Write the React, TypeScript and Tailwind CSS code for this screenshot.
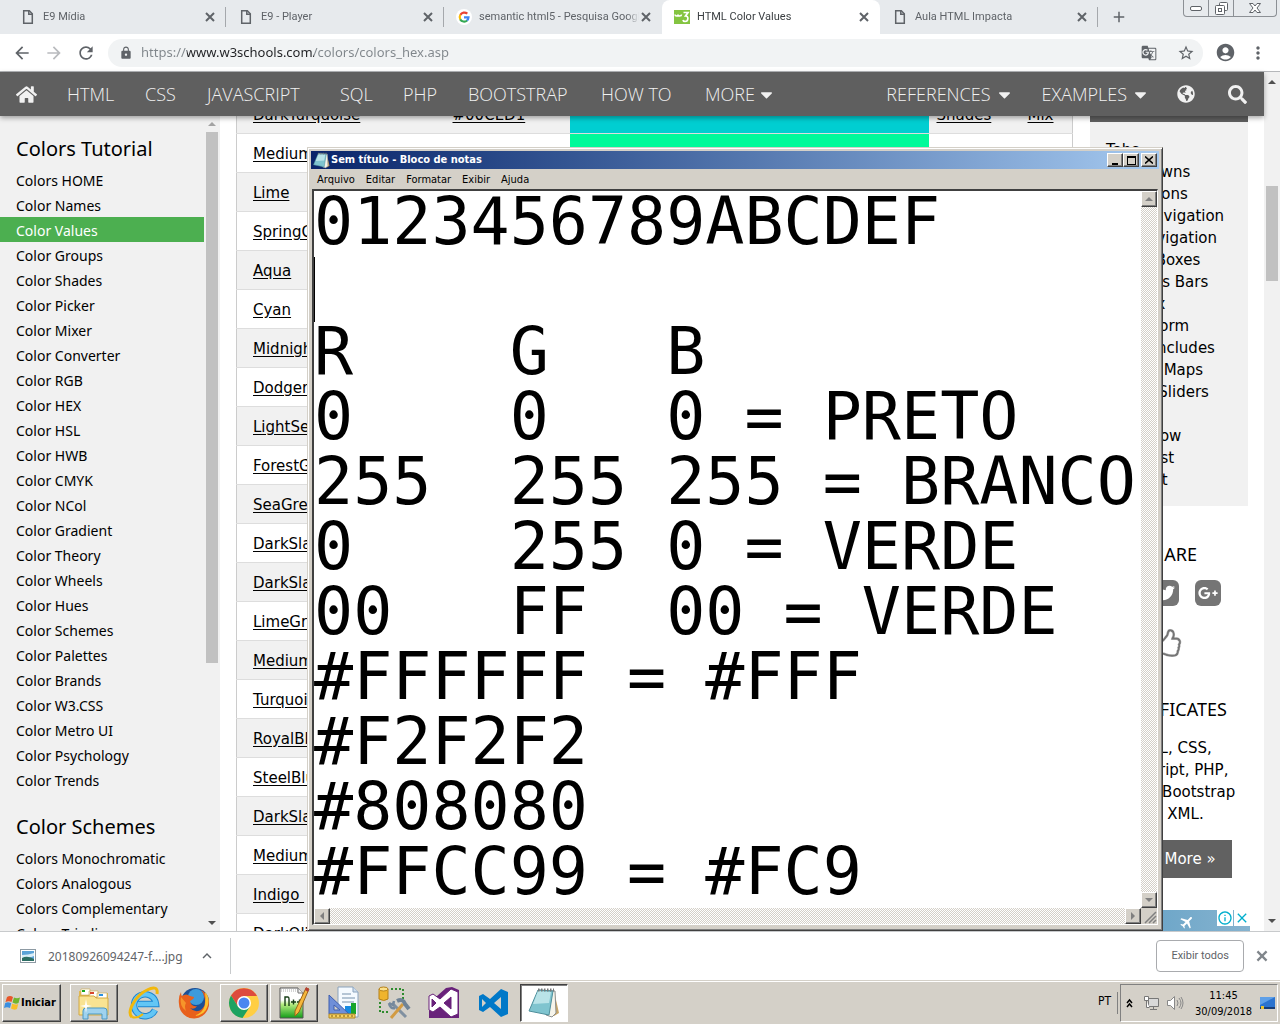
import React from "react";
import { FaHome, FaSearch, FaGlobeAmericas, FaCaretDown, FaTwitter, FaGooglePlusG, FaFacebookF, FaRegThumbsUp } from "react-icons/fa";
import { MdArrowBack, MdArrowForward, MdRefresh, MdLock, MdStarBorder, MdAccountCircle, MdMoreVert, MdGTranslate, MdClose, MdAdd, MdExpandLess, MdInfoOutline, MdLocalAirport } from "react-icons/md";

const ui = "font-['Noto_Sans',sans-serif]";
const verdana = "font-['DejaVu_Sans',sans-serif]";

function PageIcon() {
  return (
    <svg width="16" height="16" viewBox="0 0 16 16" fill="none" stroke="#5f6368" strokeWidth="1.5" aria-hidden="true">
      <path d="M3.7 1.7h5.6l3 3v9.6H3.7z" />
      <path d="M8.8 1.7v3.6h3.5" />
    </svg>
  );
}

function GoogleIcon() {
  return (
    <svg width="16" height="16" viewBox="0 0 48 48" aria-hidden="true">
      <circle cx="24" cy="24" r="24" fill="#fff" />
      <g fill="none" strokeWidth="6.5">
        <path d="M13 17.5A14 14 0 0 1 34 14" stroke="#ea4335" />
        <path d="M13 31a14 14 0 0 1 0-14" stroke="#fbbc05" />
        <path d="M12.500 31a14 14 0 0 0 21 3.500" stroke="#34a853" />
        <path d="M24 25h13.500a14 14 0 0 1-4.500 9.500" stroke="#4285f4" />
      </g>
    </svg>
  );
}

function W3Icon() {
  return (
    <svg width="16" height="14" viewBox="0 0 16 14" aria-hidden="true">
      <rect width="16" height="14" fill="#84c441" />
      <path d="M1 4.500c0 2 3 2 3 0 0 2 3.500 2 3.500 0" fill="none" stroke="#fff" strokeWidth="1.600" />
      <path d="M9.500 2.500h4.500l-2.500 3.500c3.500 0 3 5.500-.5 5.500-1 0-1.800-.5-2-1.500" fill="none" stroke="#fff" strokeWidth="1.700" />
    </svg>
  );
}

function CrossIcon({ size }: { size: number }) {
  return (
    <svg width={size} height={size} viewBox="0 0 14 14" fill="none" stroke="currentColor" strokeWidth="2" aria-hidden="true">
      <path d="M3 3l8 8M11 3l-8 8" />
    </svg>
  );
}

const tabs = [
  { title: "E9 Mídia", icon: <PageIcon />, active: false, sep: true },
  { title: "E9 - Player", icon: <PageIcon />, active: false, sep: true },
  { title: "semantic html5 - Pesquisa Google", icon: <GoogleIcon />, active: false, sep: false },
  { title: "HTML Color Values", icon: <W3Icon />, active: true, sep: false },
  { title: "Aula HTML Impacta", icon: <PageIcon />, active: false, sep: true },
];

function TabStrip() {
  return (
    <header className="relative flex h-[34px] shrink-0 bg-[#e7eaed] pl-2 font-[Roboto,sans-serif] text-[11px] text-[#5f6368]">
      {tabs.map((t) => (
        <div
          key={t.title}
          className={
            t.active
              ? "relative flex w-[218px] items-center rounded-t-lg bg-white pl-3 pr-[9px] text-[#3c4043]"
              : "relative flex w-[218px] items-center pl-3 pr-[9px]"
          }
        >
          {t.icon}
          <span className="ml-[7px] min-w-0 flex-1 overflow-hidden whitespace-nowrap [mask-image:linear-gradient(to_left,transparent,#000_12px)]">{t.title}</span>
          <button aria-label={`Fechar ${t.title}`} className="text-[#5f6368]">
            <CrossIcon size={14} />
          </button>
          {t.sep && <span className="absolute right-0 top-[7px] h-5 w-px bg-[#a5a8ac]" />}
        </div>
      ))}
      <button aria-label="Nova guia" className="ml-3 text-[#5f6368]">
        <MdAdd size={18} />
      </button>
      <div className="absolute right-[3px] top-0 flex h-[17px] w-[94px] divide-x divide-[#8c9095] rounded-b border border-t-0 border-[#8c9095]">
        <button aria-label="Minimizar" className="flex w-[25px] items-center justify-center">
          <svg width="12" height="5"><rect x=".5" y=".5" width="11" height="4" rx="1.500" fill="#fff" stroke="#5f6368" /></svg>
        </button>
        <button aria-label="Restaurar" className="flex w-[25px] items-center justify-center">
          <svg width="13" height="13" fill="#fff" stroke="#5f6368">
            <rect x="4.500" y=".5" width="8" height="8" rx="1" />
            <rect x=".5" y="3.500" width="9" height="9" rx="1" />
            <rect x="3.500" y="6.500" width="3" height="3" />
          </svg>
        </button>
        <button aria-label="Fechar" className="flex flex-1 items-center justify-center">
          <svg width="12" height="10" viewBox="0 0 12 10" fill="#fff" stroke="#5f6368">
            <path d="M.5.500h3.500l2 2.500 2-2.500h3.500L8 5l3.500 4.500H8L6 7 4 9.500H.5L4 5z" />
          </svg>
        </button>
      </div>
    </header>
  );
}

function Toolbar() {
  return (
    <div className="flex h-[38px] shrink-0 items-center border-b border-[#b5b7ba] bg-white pl-3 pr-3 text-[#5f6368]">
      <button aria-label="Voltar" className="w-8"><MdArrowBack size={20} /></button>
      <button aria-label="Avançar" className="w-8 text-[#b9bbbe]"><MdArrowForward size={20} /></button>
      <button aria-label="Recarregar" className="w-8"><MdRefresh size={20} /></button>
      <form className="flex h-7 flex-1 items-center rounded-full bg-[#f1f3f4] pl-[11px] pr-2">
        <MdLock size={14} />
        <label htmlFor="url" className="sr-only">Endereço</label>
        <input
          id="url"
          defaultValue="https://www.w3schools.com/colors/colors_hex.asp"
          className={`${ui} ml-2 min-w-0 flex-1 bg-[linear-gradient(to_right,#80868b_46px,#202124_46px,#202124_173px,#80868b_173px)] bg-clip-text text-[13px] text-transparent outline-none`}
        />
        <button type="button" aria-label="Traduzir" className="mr-5"><MdGTranslate size={16} /></button>
        <button type="button" aria-label="Favoritar"><MdStarBorder size={18} /></button>
      </form>
      <button aria-label="Perfil" className="ml-3"><MdAccountCircle size={21} /></button>
      <button aria-label="Menu" className="ml-3"><MdMoreVert size={20} /></button>
    </div>
  );
}

function SiteNav() {
  return (
    <nav className="relative z-10 flex h-11 shrink-0 items-center bg-[#5f5f5f] font-['Open_Sans',sans-serif] text-lg font-light text-[#f1f1f1] shadow-[0_2px_5px_rgba(0,0,0,0.35)]">
      <a href="#home" aria-label="Home" className="w-[51px] pl-4"><FaHome size={21} /></a>
      <a href="#html" className="w-[78px] pl-4">HTML</a>
      <a href="#css" className="w-[62px] pl-4">CSS</a>
      <a href="#js" className="w-[133px] pl-4">JAVASCRIPT</a>
      <a href="#sql" className="w-[63px] pl-4">SQL</a>
      <a href="#php" className="w-[65px] pl-4">PHP</a>
      <a href="#bootstrap" className="w-[133px] pl-4">BOOTSTRAP</a>
      <a href="#howto" className="w-[104px] whitespace-nowrap pl-4">HOW TO</a>
      <button className="flex items-center gap-[2px] px-4">MORE <FaCaretDown size={19} /></button>
      <span className="flex-1" />
      <button className="flex items-center gap-1 px-[14px]">REFERENCES <FaCaretDown size={19} /></button>
      <button className="flex items-center gap-1 px-[14px]">EXAMPLES <FaCaretDown size={19} /></button>
      <button aria-label="Translate" className="pl-[13px] pr-[17px]"><FaGlobeAmericas size={18} /></button>
      <button aria-label="Search" className="pl-4 pr-[17px]"><FaSearch size={19} /></button>
    </nav>
  );
}

const tutorial = ["Colors HOME", "Color Names", "Color Values", "Color Groups", "Color Shades", "Color Picker", "Color Mixer", "Color Converter", "Color RGB", "Color HEX", "Color HSL", "Color HWB", "Color CMYK", "Color NCol", "Color Gradient", "Color Theory", "Color Wheels", "Color Hues", "Color Schemes", "Color Palettes", "Color Brands", "Color W3.CSS", "Color Metro UI", "Color Psychology", "Color Trends"];
const schemes = ["Colors Monochromatic", "Colors Analogous", "Colors Complementary", "Colors Triadic"];

function SideLinks({ title, items }: { title: string; items: string[] }) {
  return (
    <section>
      <h2 className="px-4 text-xl leading-[30px]">{title}</h2>
      <ul className="mt-[3px]">
        {items.map((i) => (
          <li key={i}>
            <a href="#color" className={i === "Color Values" ? "block bg-[#4caf50] px-4 pt-[2px] text-sm leading-[23px] text-white" : "block px-4 pt-[2px] text-sm leading-[23px]"}>{i}</a>
          </li>
        ))}
      </ul>
    </section>
  );
}

function Arrow({ dir, color = "#505050" }: { dir: "up" | "down" | "left" | "right"; color?: string }) {
  const d = { up: "M0 6l4-4 4 4z", down: "M0 2l4 4 4-4z", left: "M6 0L2 4l4 4z", right: "M2 0l4 4-4 4z" }[dir];
  return <svg width="8" height="8" viewBox="0 0 8 8" className="shrink-0" aria-hidden="true"><path d={d} fill={color} /></svg>;
}

function Sidebar() {
  return (
    <aside className={`${ui} flex w-[220px] shrink-0 bg-[#f1f1f1] text-black`}>
      <div className="flex-1 space-y-[20px] overflow-hidden pt-[18px]">
        <SideLinks title="Colors Tutorial" items={tutorial} />
        <SideLinks title="Color Schemes" items={schemes} />
      </div>
      <div className="flex w-4 flex-col items-center pb-1 pt-1">
        <Arrow dir="up" color="#a3a3a3" />
        <div className="mt-1 h-[531px] w-3 bg-[#c1c1c1]" />
        <span className="flex-1" />
        <Arrow dir="down" />
      </div>
    </aside>
  );
}

const colors: [string, string][] = [
  ["DarkTurquoise", "#00CED1"], ["MediumSpringGreen", "#00FA9A"], ["Lime", "#00FF00"], ["SpringGreen", "#00FF7F"],
  ["Aqua", "#00FFFF"], ["Cyan", "#00FFFF"], ["MidnightBlue", "#191970"], ["DodgerBlue", "#1E90FF"],
  ["LightSeaGreen", "#20B2AA"], ["ForestGreen", "#228B22"], ["SeaGreen", "#2E8B57"], ["DarkSlateGray", "#2F4F4F"],
  ["DarkSlateGrey", "#2F4F4F"], ["LimeGreen", "#32CD32"], ["MediumSeaGreen", "#3CB371"], ["Turquoise", "#40E0D0"],
  ["RoyalBlue", "#4169E1"], ["SteelBlue", "#4682B4"], ["DarkSlateBlue", "#483D8B"], ["MediumTurquoise", "#48D1CC"],
  ["Indigo\u00a0", "#4B0082"], ["DarkOliveGreen", "#556B2F"],
];

function ColorTable() {
  return (
    <table className={`${verdana} w-full table-fixed border-collapse border border-[#ccc] text-[15px] text-black`}>
      <colgroup>
        <col className="w-[208px]" /><col className="w-[125px]" /><col /><col className="w-[91px]" /><col className="w-[53px]" />
      </colgroup>
      <tbody>
        {colors.map(([name, hex]) => (
          <tr key={name} className="h-[39px] border-b border-[#ddd] odd:bg-[#f1f1f1]">
            <td className="pl-4 pt-[2px]"><a href="#name" className="underline underline-offset-2">{name}</a></td>
            <td className="pl-2 pt-[2px]"><a href="#hex" className="underline underline-offset-2">{hex}</a></td>
            <td style={{ backgroundColor: hex }} />
            <td className="pl-2 pt-[2px]"><a href="#shades" className="underline underline-offset-2">Shades</a></td>
            <td className="pl-2 pt-[2px]"><a href="#mix" className="underline underline-offset-2">Mix</a></td>
          </tr>
        ))}
      </tbody>
    </table>
  );
}

const howTos = ["Tabs", "Dropdowns", "Accordions", "Side Navigation", "Top Navigation", "Modal Boxes", "Progress Bars", "Parallax", "Login Form", "HTML Includes", "Google Maps", "Range Sliders", "Tooltips", "Slideshow", "Filter List", "Sort List"];

function RightColumn() {
  return (
    <aside className={`${verdana} w-[158px] shrink-0 text-[15px] text-black`}>
      <div className="h-[6px] bg-[#5f5f5f]" />
      <ul className="bg-[#f1f1f1] px-4 pb-[15px] pt-[17px] leading-[22px]">
        {howTos.map((h) => <li key={h} className="whitespace-nowrap"><a href="#howto">{h}</a></li>)}
      </ul>
      <div className="text-center">
        <h3 className={`${ui} mt-[34px] text-lg leading-7`}>SHARE</h3>
        <div className="mt-3 flex justify-center gap-4 pr-[6px] text-white">
          <a href="#fb" aria-label="Facebook" className="flex size-[26px] items-center justify-center rounded-md bg-[#757575]"><FaFacebookF size={16} /></a>
          <a href="#tw" aria-label="Twitter" className="flex size-[26px] items-center justify-center rounded-md bg-[#757575]"><FaTwitter size={18} /></a>
          <a href="#gp" aria-label="Google Plus" className="flex size-[26px] items-center justify-center rounded-md bg-[#757575]"><FaGooglePlusG size={20} /></a>
        </div>
        <a href="#like" aria-label="Like" className="mt-[23px] flex justify-center text-[#757575]"><FaRegThumbsUp size={28} stroke="#fff" strokeWidth={8} /></a>
        <h3 className={`${ui} mt-[38px] text-lg leading-7`}>CERTIFICATES</h3>
        <p className="-ml-2 -mr-2 mt-[14px] whitespace-nowrap leading-[22px]">HTML, CSS,<br />JavaScript, PHP,<br />jQuery, Bootstrap<br />and XML.</p>
      </div>
      <a href="#more" className="mx-4 mt-[15px] block h-[38px] whitespace-nowrap bg-[#616161] pl-4 leading-[38px] text-white">Read More »</a>
      <div className="-mr-[2px] mt-8 flex h-6 items-start justify-end bg-gradient-to-r from-[#5b9dc4] to-[#86b3cf] text-[#00aecd]">
        <MdLocalAirport size={16} className="mr-[22px] mt-1 rotate-45 text-white" />
        <button aria-label="Sobre o anúncio" className="mr-px bg-white"><MdInfoOutline size={16} /></button>
        <button aria-label="Fechar anúncio" className="bg-white"><MdClose size={16} /></button>
      </div>
    </aside>
  );
}

const raised = "border border-b-[#404040] border-l-white border-r-[#404040] border-t-white bg-[#d4d0c8] shadow-[inset_-1px_-1px_0_#808080]";

function Notepad() {
  const text = ["0123456789ABCDEF", "", "R    G   B", "0    0   0 = PRETO", "255  255 255 = BRANCO", "0    255 0 = VERDE", "00   FF  00 = VERDE", "#FFFFFF = #FFF", "#F2F2F2", "#808080", "#FFCC99 = #FC9"].join("\n");
  const dither = "bg-[repeating-conic-gradient(#d4d0c8_0_25%,#ffffff_0_50%)] bg-[length:2px_2px]";
  const box = `${raised} flex items-center justify-center`;
  return (
    <section aria-label="Bloco de notas" className="absolute left-[307px] top-[147px] z-20 flex h-[784px] w-[856px] flex-col border border-b-[#404040] border-l-[#d4d0c8] border-r-[#404040] border-t-[#d4d0c8] bg-[#d4d0c8] p-[3px] font-['DejaVu_Sans_Condensed','DejaVu_Sans',sans-serif] text-[11px] text-black shadow-[inset_1px_1px_0_#fff,inset_-1px_-1px_0_#808080]">
      <div className="flex h-[18px] shrink-0 items-center bg-gradient-to-r from-[#0a246a] to-[#a6caf0] pl-[2px] pr-[2px]">
        <NotepadIcon size={17} />
        <h1 className="flex-1 pl-px font-bold text-white">Sem título - Bloco de notas</h1>
        <button aria-label="Minimizar" className={`${box} h-[14px] w-4`}><span className="mt-[7px] h-[2px] w-[6px] bg-black" /></button>
        <button aria-label="Maximizar" className={`${box} h-[14px] w-4`}><span className="h-[9px] w-[9px] border border-t-2 border-black" /></button>
        <button aria-label="Fechar" className={`${box} ml-[2px] h-[14px] w-4`}>
          <svg width="8" height="8" stroke="#000" strokeWidth="1.600"><path d="M0 .5l8 7M8 .5l-8 7" /></svg>
        </button>
      </div>
      <div className="flex h-5 shrink-0 items-center gap-[11px] pl-[6px] pt-[2px]">
        {["Arquivo", "Editar", "Formatar", "Exibir", "Ajuda"].map((m) => <button key={m}>{m}</button>)}
      </div>
      <div className="mx-px mb-[2px] flex min-h-0 flex-1 flex-col border border-l-2 border-t-2 border-b-white border-l-[#404040] border-r-white border-t-[#404040]">
        <div className="flex min-h-0 flex-1">
          <div className="relative flex-1 overflow-hidden bg-white">
            <label htmlFor="note" className="sr-only">Texto</label>
            <textarea
              id="note"
              wrap="off"
              spellCheck={false}
              defaultValue={text}
              className="-mt-[2px] block h-[calc(100%+2px)] w-full resize-none overflow-hidden whitespace-pre bg-white font-['DejaVu_Sans_Mono',monospace] text-[65px] leading-[65px] text-black outline-none"
            />
            <span className="absolute left-0 top-[66px] h-[65px] w-px bg-black" />
          </div>
          <div className={`${dither} flex w-4 flex-col justify-between`}>
            <button aria-label="Rolar para cima" className={`${box} h-4 w-4`}><Arrow dir="up" color="#808080" /></button>
            <button aria-label="Rolar para baixo" className={`${box} h-4 w-4`}><Arrow dir="down" color="#808080" /></button>
          </div>
        </div>
        <div className="flex h-4 shrink-0">
          <div className={`${dither} flex flex-1 justify-between`}>
            <button aria-label="Rolar para a esquerda" className={`${box} h-4 w-4`}><Arrow dir="left" color="#808080" /></button>
            <button aria-label="Rolar para a direita" className={`${box} h-4 w-4`}><Arrow dir="right" color="#808080" /></button>
          </div>
          <svg width="16" height="16" stroke="#808080" strokeWidth="1.500" aria-hidden="true"><path d="M4 15L15 4M8 15l7-7M12 15l3-3" /></svg>
        </div>
      </div>
    </section>
  );
}

function NotepadIcon({ size }: { size: number }) {
  return (
    <svg width={size} height={size} viewBox="0 0 32 32" aria-hidden="true">
      <path d="M26 4l5 22-5 3z" fill="#c9a667" />
      <path d="M10 3l17 1 1 22-4 4-6-2z" fill="#f6f4ea" stroke="#8b8f8f" />
      <path d="M10 3l15 1-4 24L1 24z" fill="#7fc4cf" stroke="#4e8f9c" />
      <path d="M10 4l13 1-2 11L5 17z" fill="#b9e3e8" />
      <path d="M10 3h16" stroke="#777" strokeWidth="3" strokeDasharray="1.500 1.500" />
    </svg>
  );
}

function DownloadShelf() {
  return (
    <footer className={`${ui} flex h-[49px] shrink-0 items-center border-t border-[#c8cacc] bg-white pl-5 pr-[10px] text-xs text-[#5f6368]`}>
      <button className="flex items-center">
        <svg width="16" height="14" aria-hidden="true">
          <rect x=".5" y=".5" width="15" height="13" fill="#fff" stroke="#8d9aa3" />
          <rect x="2" y="2" width="12" height="10" fill="#5ba3d8" />
          <path d="M2 6q6 0 12-2v3q-6 3-12 2z" fill="#d9eef8" />
          <path d="M2 9q5-3 12 1v2H2z" fill="#2c6e63" />
        </svg>
        <span className="ml-3 pt-[2px]">20180926094247-f....jpg</span>
      </button>
      <button aria-label="Mais opções" className="ml-[15px]"><MdExpandLess size={18} /></button>
      <span className="ml-[14px] h-9 w-px bg-[#c8cacc]" />
      <span className="flex-1" />
      <button className="h-8 rounded border border-[#a9abae] px-[14px] font-[Roboto,sans-serif] text-[11px]">Exibir todos</button>
      <button aria-label="Fechar downloads" className="ml-[10px] text-[#80868b]"><CrossIcon size={16} /></button>
    </footer>
  );
}

const ExplorerIcon = () => (
  <svg width="34" height="34" viewBox="0 0 34 34" aria-hidden="true">
    <path d="M2 5h9l2 2h18v22H2z" fill="#e2b953" />
    <path d="M4 3h9v6H4zM12 5h9v6h-9zM20 7h10v6H20z" fill="#fff" stroke="#c9a94a" strokeWidth=".6" />
    <path d="M5 4h3v2H5z" fill="#17a81a" /><path d="M13 6h4v2h-4z" fill="#d8442c" /><path d="M22 8h4v2h-4z" fill="#2a8fe0" />
    <path d="M2 10h15l2 2h12v17H2z" fill="#f9e392" stroke="#d3a943" />
    <path d="M6 33V25q0-3 3-3h18q3 0 3 3v8h-5v-5H11v5z" fill="#9fd2ee" stroke="#4b98c4" />
    <path d="M9 13l1 6 5 1-5 1-1 6-1-6-5-1 5-1z" fill="#fff" />
  </svg>
);
const IEIcon = () => (
  <svg width="32" height="34" viewBox="0 0 32 34" fill="none" aria-hidden="true">
    <path d="M27 24a11 11 0 1 1 1-6H10" stroke="#1d85cf" strokeWidth="6.500" />
    <path d="M27 24a11 11 0 1 1 1-6H10" stroke="#63c6f5" strokeWidth="4.500" />
    <path d="M4 31C-2 26 8 9 19 4c8-4 11-2 10 4" stroke="#f2b80c" strokeWidth="3" />
    <path d="M4 31q5 2 11-3" stroke="#f2b80c" strokeWidth="2" />
  </svg>
);
const FirefoxIcon = () => (
  <svg width="32" height="32" viewBox="0 0 32 32" aria-hidden="true">
    <circle cx="17" cy="15" r="14" fill="#1c4f96" /><circle cx="18" cy="10" r="8" fill="#3c9bdc" />
    <path d="M3 5q0 3 1 4 4-3 8 0l4 1q0 2-4 4 1 6 7 5-2 4-7 2 6 6 12 1 5-5 2-13-1-4-3-6 8 4 8 13a15 15 0 0 1-30 1Q0 10 3 5z" fill="#e8601c" />
    <path d="M27 5q5 5 3 13-3 11-14 11 9-3 11-11 1-7 0-13z" fill="#fbc02f" />
    <path d="M3 10q-2 9 5 14-2-5 0-8z" fill="#f6952a" />
  </svg>
);
const ChromeIcon = () => (
  <svg width="32" height="32" viewBox="0 0 32 32" aria-hidden="true">
    <circle cx="16" cy="16" r="15" fill="#ffce43" />
    <path d="M16 9h12.990A15 15 0 0 0 3.010 8.500L10 19.500z" fill="#dd4b3e" />
    <path d="M3.010 8.500A15 15 0 0 0 14.500 31L22 19.500l-12 0z" fill="#1da261" />
    <circle cx="16" cy="16" r="7" fill="#fff" /><circle cx="16" cy="16" r="5.500" fill="#4a86f0" />
  </svg>
);
const NppIcon = () => (
  <svg width="32" height="34" viewBox="0 0 32 34" aria-hidden="true">
    <defs><linearGradient id="npp" x2="0" y2="1"><stop offset=".4" stopColor="#fff" /><stop offset=".55" stopColor="#b5ec80" /><stop offset="1" stopColor="#129c17" /></linearGradient></defs>
    <path d="M2 2h18l5 5v25H2z" fill="url(#npp)" stroke="#555" />
    <path d="M3 3h17M3 5h17" stroke="#aaa" strokeDasharray="1 1" /><path d="M20 2v5h5" fill="#eee" stroke="#777" />
    <path d="M7 20v-9h3q1 0 1 2v7M13 16h5M15.500 13.500v5M19 16h5M21.500 13.500v5" fill="none" stroke="#163d16" strokeWidth="1.400" />
    <path d="M28 2l3 1-10 23-4 4v-5z" fill="#f6b83c" stroke="#9b6418" /><path d="M28 1l3 2-1 3-3-2z" fill="#b63e35" />
  </svg>
);
const DesignIcon = () => (
  <svg width="34" height="34" viewBox="0 0 34 34" aria-hidden="true">
    <path d="M11 1h15l5 5v25H11z" fill="#f5faff" stroke="#8ba3bd" /><path d="M26 1v5h5" fill="#cfdeee" stroke="#8ba3bd" />
    <path d="M15 8h9M15 12h13M15 16h12" stroke="#a0b4c8" strokeWidth="1.500" />
    <path d="M18 20h6v9h-6z" fill="#168ae2" /><path d="M24 17h5v11h-5z" fill="#18a52a" />
    <path d="M2 9l20 19H2zM7 19v5h6z" fill="#6f8fd8" fillRule="evenodd" stroke="#3f5faf" />
    <path d="M2 28h26v4H2z" fill="#f5d165" stroke="#b18720" /><path d="M5 29v2M9 29v2M13 29v2M17 29v2M21 29v2M25 29v2" stroke="#805d0f" />
  </svg>
);
const ToolsIcon = () => (
  <svg width="34" height="34" viewBox="0 0 34 34" fill="none" aria-hidden="true">
    <path d="M14 3h12v11M3 16v10h10" stroke="#2e8b2e" strokeWidth="2" strokeDasharray="2 2" />
    <path d="M2 3v10q5 3 9 0V3z" fill="#efb42e" stroke="#b5811a" /><ellipse cx="6.500" cy="3" rx="4.500" ry="2" fill="#fbe08a" stroke="#b5811a" />
    <path d="M15 17l14 14" stroke="#8090a0" strokeWidth="3" /><path d="M12 17q1 6 6 5M12 17l4 2 1-4" stroke="#75899d" strokeWidth="2.500" />
    <path d="M26 18L14 32" stroke="#d29b42" strokeWidth="3" /><path d="M20 15q6-3 8 3l4 5" stroke="#6f8396" strokeWidth="4" />
  </svg>
);
const VSIcon = ({ code }: { code?: boolean }) => (
  <svg width="32" height="34" viewBox="0 0 32 34" aria-hidden="true">
    {!code && <path d="M1 10h8l9-8 6-1 7 3v28H1z" fill="#68217a" />}
    <path d="M23 3l7 3v22l-7 3L12 21l-7 5-4-2V10l4-2 7 5zM23 11l-7 6 7 6zM4 13v8l4-4z" fill={code ? "#0078c8" : "#fff"} fillRule="evenodd" stroke={code ? "none" : "#68217a"} />
  </svg>
);

const tasks = [
  { label: "Explorer", icon: <ExplorerIcon />, state: "open" }, { label: "Internet Explorer", icon: <IEIcon />, state: "" },
  { label: "Firefox", icon: <FirefoxIcon />, state: "" }, { label: "Chrome", icon: <ChromeIcon />, state: "open" },
  { label: "Notepad++", icon: <NppIcon />, state: "open" }, { label: "Designer", icon: <DesignIcon />, state: "" },
  { label: "Ferramentas", icon: <ToolsIcon />, state: "" }, { label: "Visual Studio", icon: <VSIcon />, state: "" },
  { label: "VS Code", icon: <VSIcon code />, state: "" }, { label: "Bloco de notas", icon: <NotepadIcon size={32} />, state: "active" },
];

function Taskbar() {
  return (
    <footer className="flex h-11 shrink-0 items-center border-t border-[#d4d0c8] bg-[#d4d0c8] pl-[2px] pr-[2px] pt-px font-['DejaVu_Sans_Condensed','DejaVu_Sans',sans-serif] text-[11px] text-black shadow-[inset_0_1px_0_#fff]">
      <button className={`${raised} flex h-[38px] w-[59px] items-center font-bold`}>
        <svg width="17" height="16" viewBox="0 0 17 16" className="ml-px" aria-hidden="true">
          <path d="M3 2q3-2 6 0L7.500 7Q5 5.500 1.500 7z" fill="#e8562a" /><path d="M10 2.500q3 1.500 6 0L14.500 8q-3 1.500-6-.5z" fill="#6fb52c" />
          <path d="M1.200 8Q4 6.500 7.200 8.200L6 13q-3-1.500-6 0z" fill="#3a8fe0" /><path d="M8.200 8.700q3 1.500 6 .3L13 14q-3 1.500-6-.5z" fill="#f8bf28" />
        </svg>
        Iniciar
      </button>
      <div className="ml-[9px] flex gap-[2px]">
        {tasks.map((t) => (
          <button
            key={t.label}
            aria-label={t.label}
            className={
              t.state === "open"
                ? "flex h-[38px] w-12 items-center justify-center border border-b-[#404040] border-l-white border-r-[#404040] border-t-white shadow-[inset_-1px_-1px_0_#808080]"
                : t.state === "active"
                  ? "flex h-[38px] w-12 items-center justify-center border border-b-white border-l-[#404040] border-r-white border-t-[#404040] bg-white shadow-[inset_1px_1px_0_#808080]"
                  : "flex h-[38px] w-12 items-center justify-center"
            }
          >
            {t.icon}
          </button>
        ))}
      </div>
      <span className="flex-1" />
      <span className="mb-1 text-xs">PT</span>
      <span className="ml-[6px] h-[22px] w-px bg-[#808080]" />
      <div className="ml-[2px] flex h-[38px] w-[158px] items-center border border-b-white border-l-[#808080] border-r-white border-t-[#808080] pl-1 pr-px">
        <svg width="9" height="10" fill="none" stroke="#000" strokeWidth="1.500" aria-hidden="true"><path d="M2 5l2.500-3L7 5M2 9l2.500-3L7 9" /></svg>
        <svg width="17" height="16" className="ml-[9px]" fill="#d9d9d9" stroke="#777" aria-hidden="true">
          <path d="M5.500 3.500h10v8h-10z" /><path d="M7 14.500h7M10.500 12v2" /><path d="M1.500 1.500h4v4h-4zM3.500 5.500v7h3" fill="#fff" />
        </svg>
        <svg width="17" height="16" className="ml-[7px]" fill="#fff" stroke="#888" aria-hidden="true">
          <path d="M.5 5.500h3l4-4v13l-4-4h-3z" /><path d="M10 5q2 3 0 6M12 3q4 5 0 10M14 2q4 6 0 12" fill="none" />
        </svg>
        <div className="flex-1 pl-1 pt-px text-center leading-4"><div>11:45</div><div>30/09/2018</div></div>
        <svg width="17" height="14" aria-hidden="true">
          <rect x="1" y="1" width="15" height="11" fill="#2b73cf" /><path d="M1 1h15L1 9z" fill="#5fa0e8" /><path d="M1 11h15v2H1z" fill="#173d77" /><path d="M2 10h3v3H2z" fill="#e8c22f" />
        </svg>
      </div>
    </footer>
  );
}

export default function App() {
  return (
    <div className="relative flex h-screen flex-col overflow-hidden bg-white">
      <TabStrip />
      <Toolbar />
      <div className="flex min-h-0 flex-1">
        <div className="flex min-w-0 flex-1 flex-col">
          <SiteNav />
          <div className="flex min-h-0 flex-1 overflow-hidden">
            <Sidebar />
            <main className="-mt-[22px] min-w-0 flex-1 pl-4 pr-[17px]">
              <ColorTable />
            </main>
            <div className="pr-4"><RightColumn /></div>
          </div>
        </div>
        <div className="flex w-4 shrink-0 flex-col items-center bg-[#f1f1f1] py-[6px]">
          <Arrow dir="up" />
          <div className="mt-[100px] h-[95px] w-3 bg-[#c1c1c1]" />
          <span className="flex-1" />
          <Arrow dir="down" />
        </div>
      </div>
      <DownloadShelf />
      <Taskbar />
      <Notepad />
    </div>
  );
}
